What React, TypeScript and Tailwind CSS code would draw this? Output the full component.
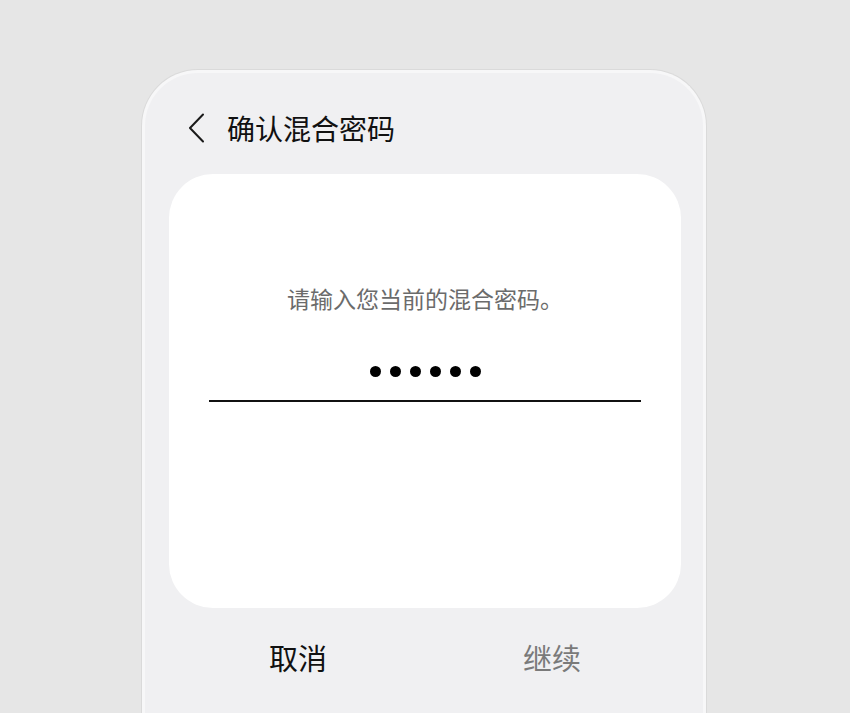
import React from "react";

export default function App() {
  const font = { fontFamily: '"Noto Sans CJK SC", "Noto Sans", sans-serif' };
  return (
    <div className="w-[850px] h-[713px] overflow-hidden bg-[#e6e6e6]" style={font}>
      <div className="ml-[142px] mt-[70px] w-[564px] h-[700px] rounded-t-[56px] border-[3px] border-b-0 border-[#f7f7f8] bg-[#f0f0f2] shadow-[0_0_0_1px_#dadada] flex flex-col">
        <div className="h-[101px] pt-[40px] pl-[43px] flex items-start">
          <div className="h-[30px] flex items-center">
            <svg width="16" height="30" viewBox="0 0 16 30" fill="none">
              <polyline points="15,1.5 2,15 15,28.5" stroke="#1a1a1a" strokeWidth="2" strokeLinecap="round" strokeLinejoin="round" />
            </svg>
          </div>
          <div className="ml-[23px] text-[28px] leading-[30px] text-[#111111]">确认混合密码</div>
        </div>
        <div className="ml-[24px] w-[512px] h-[434px] rounded-[44px] bg-white flex flex-col px-10">
          <div className="pt-[109px] text-center text-[23px] leading-[30px] text-[#6b6b6b] whitespace-nowrap">请输入您当前的混合密码。</div>
          <div className="mt-[53px] flex justify-center gap-[9px]">
            <div className="w-[11px] h-[11px] rounded-full bg-black" />
            <div className="w-[11px] h-[11px] rounded-full bg-black" />
            <div className="w-[11px] h-[11px] rounded-full bg-black" />
            <div className="w-[11px] h-[11px] rounded-full bg-black" />
            <div className="w-[11px] h-[11px] rounded-full bg-black" />
            <div className="w-[11px] h-[11px] rounded-full bg-black" />
          </div>
          <div className="mt-[23px] h-[2px] bg-[#111111]" />
        </div>
        <div className="ml-[26px] w-[508px] mt-[31px] flex">
          <div className="flex-1 text-center text-[29px] leading-[36px] text-[#111111]">取消</div>
          <div className="flex-1 text-center text-[29px] leading-[36px] text-[#7a7a7a]">继续</div>
        </div>
      </div>
    </div>
  );
}
